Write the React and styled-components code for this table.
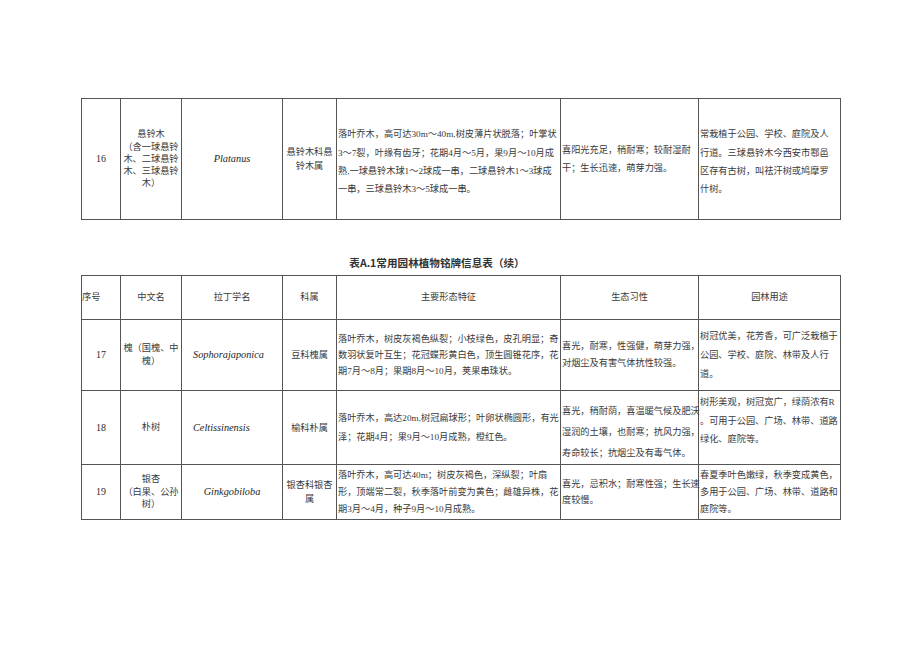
import React from 'react';
import styled, { createGlobalStyle } from 'styled-components';

const GlobalStyle = createGlobalStyle`
  html, body {
    margin: 0;
    padding: 0;
    background: #fff;
  }
  body {
    font-family: "Liberation Serif", "Noto Sans CJK SC", serif;
    color: #3a3a3a;
  }
`;

const Page = styled.div`
  width: 920px;
  height: 651px;
  padding: 98px 0 0 81px;
  box-sizing: border-box;
`;

const Table = styled.table`
  border-collapse: collapse;
  table-layout: fixed;
  width: 759px;
  font-size: 9.2px;
`;

const Row = styled.tr`
  height: ${p => p.$h}px;
`;

const Td = styled.td`
  border: 1px solid #555;
  padding: ${p => p.$pt || 0}px 1px 0 ${p => p.$pl ?? 1}px;
  text-align: ${p => p.$align || 'center'};
  vertical-align: ${p => p.$valign || 'middle'};
  line-height: ${p => p.$lh || 17}px;
  white-space: nowrap;
  overflow: visible;
`;

const Num = styled.span`
  font-size: 10px;
  color: #2a2a2a;
`;

const Latin = styled.span`
  font-family: "Liberation Serif", serif;
  font-style: italic;
  font-size: 10.3px;
  color: #1e1e1e;
`;

const Title = styled.div`
  width: 759px;
  box-sizing: border-box;
  padding-right: 47px;
  margin: 36px 0 5px;
  text-align: center;
  font-family: "Noto Sans CJK SC", "Noto Sans", sans-serif;
  font-weight: 700;
  font-size: 10.6px;
  line-height: 14px;
  color: #333;
`;

const widths = [39, 61, 101, 54, 224, 138, 142];

const Cols = () => (
  <colgroup>
    {widths.map((w, i) => <col key={i} style={{ width: w }} />)}
  </colgroup>
);

const Lines = ({ lines }) => lines.map((l, i) => (
  <React.Fragment key={i}>{i > 0 && <br />}{l}</React.Fragment>
));

const rows = [
  {
    h: 71,
    num: '17',
    name: ['槐（国槐、中', '槐）'],
    nameLh: 13,
    latin: 'Sophorajaponica',
    latinAlign: 'left',
    family: ['豆科槐属'],
    morph: ['落叶乔木，树皮灰褐色纵裂；小枝绿色，皮孔明显；奇', '数羽状复叶互生；花冠蝶形黄白色，顶生圆锥花序，花', '期7月～8月；果期8月～10月，荚果串珠状。'],
    morphLh: 16,
    eco: ['喜光，耐寒，性强健，萌芽力强，', '对烟尘及有害气体抗性较强。'],
    ecoLh: 17,
    use: ['树冠优美，花芳香，可广泛栽植于', '公园、学校、庭院、林带及人行', '道。'],
    useLh: 19,
  },
  {
    h: 71,
    num: '18',
    name: ['朴树'],
    nameLh: 13,
    latin: 'Celtissinensis',
    latinAlign: 'left',
    family: ['榆科朴属'],
    morph: ['落叶乔木，高达20m,树冠扁球形；叶卵状椭圆形，有光', '泽；花期4月；果9月～10月成熟，橙红色。'],
    morphLh: 19,
    eco: ['喜光，稍耐荫，喜温暖气候及肥沃', '湿润的土壤，也耐寒；抗风力强，', '寿命较长；抗烟尘及有毒气体。'],
    ecoLh: 21,
    ecoPt: 10,
    use: ['树形美观，树冠宽广，绿荫浓有R', '。可用于公园、广场、林带、道路', '绿化、庭院等。'],
    useLh: 18.5,
    useTop: true,
  },
  {
    h: 55,
    num: '19',
    name: ['银杏', '（白果、公孙', '树）'],
    nameLh: 12.7,
    latin: 'Ginkgobiloba',
    latinAlign: 'center',
    family: ['银杏科银杏', '属'],
    familyLh: 14,
    morph: ['落叶乔木，高可达40m；树皮灰褐色，深纵裂；叶扇', '形，顶端常二裂，秋季落叶前变为黄色；雌雄异株，花', '期3月～4月，种子9月～10月成熟。'],
    morphLh: 17,
    eco: ['喜光，忌积水；耐寒性强；生长速', '度较慢。'],
    ecoLh: 16,
    use: ['春夏季叶色嫩绿，秋季变成黄色，', '多用于公园、广场、林带、道路和', '庭院等。'],
    useLh: 17,
  },
];

export default function App() {
  return (
    <Page>
      <GlobalStyle />
      <Table>
        <Cols />
        <tbody>
          <Row $h={121}>
            <Td><Num>16</Num></Td>
            <Td $lh={12.2}><Lines lines={['悬铃木', '（含一球悬铃', '木、二球悬铃', '木、三球悬铃', '木）']} /></Td>
            <Td><Latin>Platanus</Latin></Td>
            <Td $lh={14}><Lines lines={['悬铃木科悬', '铃木属']} /></Td>
            <Td $align="left" $lh={18.3} $pt={6}>
              <Lines lines={['落叶乔木，高可达30m～40m,树皮薄片状脱落；叶掌状', '3～7裂，叶缘有齿牙；花期4月～5月，果9月～10月成', '熟,一球悬铃木球1～2球成一串，二球悬铃木1～3球成', '一串，三球悬铃木3～5球成一串。']} />
            </Td>
            <Td $align="left" $lh={18}><Lines lines={['喜阳光充足，稍耐寒；较耐湿耐', '干；生长迅速，萌芽力强。']} /></Td>
            <Td $align="left" $lh={18.3} $pt={6}>
              <Lines lines={['常栽植于公园、学校、庭院及人', '行道。三球悬铃木今西安市鄠邑', '区存有古树，叫祛汗树或鸠摩罗', '什树。']} />
            </Td>
          </Row>
        </tbody>
      </Table>

      <Title>表A.1常用园林植物铭牌信息表（续）</Title>

      <Table>
        <Cols />
        <tbody>
          <Row $h={44}>
            <Td $align="left" $pl={0}>序号</Td>
            <Td>中文名</Td>
            <Td>拉丁学名</Td>
            <Td>科属</Td>
            <Td>主要形态特征</Td>
            <Td>生态习性</Td>
            <Td>园林用途</Td>
          </Row>
          {rows.map(r => (
            <Row key={r.num} $h={r.h}>
              <Td><Num>{r.num}</Num></Td>
              <Td $lh={r.nameLh}><Lines lines={r.name} /></Td>
              <Td $align={r.latinAlign} $pl={r.latinAlign === 'left' ? 11 : 1}><Latin>{r.latin}</Latin></Td>
              <Td $lh={r.familyLh || 14}><Lines lines={r.family} /></Td>
              <Td $align="left" $lh={r.morphLh}><Lines lines={r.morph} /></Td>
              <Td $align="left" $lh={r.ecoLh} $pt={r.ecoPt}><Lines lines={r.eco} /></Td>
              <Td $align="left" $lh={r.useLh} $valign={r.useTop ? 'top' : 'middle'} $pt={r.useTop ? 2 : 0}>
                <Lines lines={r.use} />
              </Td>
            </Row>
          ))}
        </tbody>
      </Table>
    </Page>
  );
}
